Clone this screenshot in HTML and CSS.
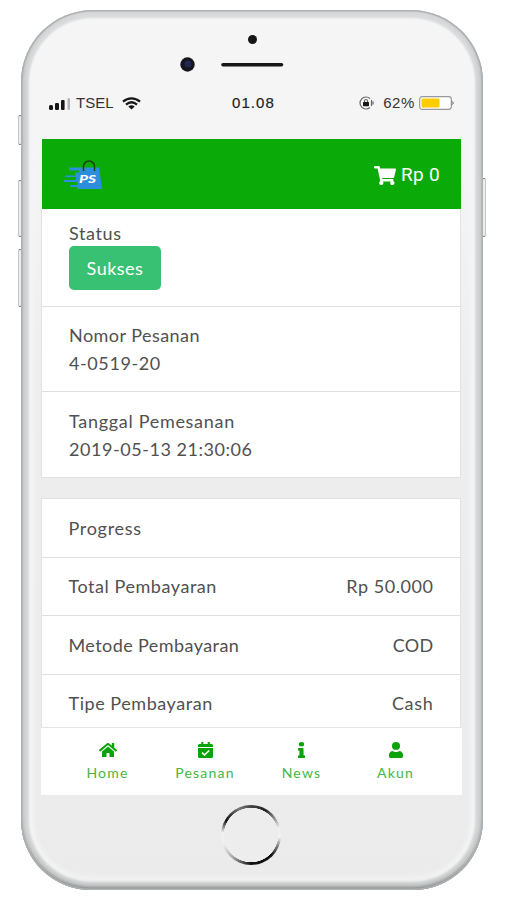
FILE: index.html
```html
<!DOCTYPE html>
<html lang="id">
<head>
<meta charset="utf-8">
<title>Detail Pesanan</title>
<link rel="stylesheet" href="styles.css">
</head>
<body>
<div class="device">
  <i class="key key-mute"></i><i class="key key-up"></i><i class="key key-down"></i><i class="key key-power"></i>
  <div class="phone">
    <div class="sensors">
      <svg width="420" height="70" viewBox="0 0 420 70">
        <circle cx="211.500" cy="29.500" r="4.500" fill="#161616"/>
        <circle cx="146.500" cy="54.500" r="7.200" fill="#15151b"/>
        <circle cx="147" cy="54" r="3.500" fill="#232653"/>
        <path d="M182 54.800h58.500" stroke="#171717" stroke-width="3.600" stroke-linecap="round"/>
      </svg>
    </div>
    <div class="statusbar">
      <div class="sb-left">
        <svg class="signal" width="22" height="13" viewBox="0 0 22 13"><g fill="#161616"><rect y="8" width="4" height="5" rx="1.500"/><rect x="6" y="6" width="4" height="7" rx="1.200"/><rect x="12" y="3" width="3.600" height="10" rx="1"/></g><rect x="18.500" y="1" width="2.500" height="12" rx="1" fill="#b5b5b5"/></svg>
        <span class="carrier">TSEL</span>
        <svg class="wifi" width="19" height="13" viewBox="0 0 19 13" fill="none" stroke="#161616" stroke-width="2.200"><path d="M1 4.600C6 .2 13 .2 18 4.600M4 7.600c3.500-3 7.500-3 11 0"/><path d="M9.500 12.500 6.300 9.600c2-1.700 4.400-1.700 6.400 0z" fill="#161616" stroke="none"/></svg>
      </div>
      <span class="clock">01.08</span>
      <div class="sb-right">
        <svg width="15" height="14" viewBox="0 0 15 14" fill="none" stroke="#666" stroke-width="1.200"><path d="M11 11.500A6 6 0 1 1 11 2.500M12.500 4v6M14 5.500v3M5.500 6.500V5a1.500 1.500 0 0 1 3 0v1.500"/><rect x="4" y="6" width="6" height="4.200" rx=".6" fill="#161616" stroke="none"/></svg>
        <span class="pct">62%</span>
        <svg width="36" height="14" viewBox="0 0 36 14"><rect x=".7" y=".7" width="31.600" height="12.600" rx="2.500" fill="#fff" stroke="#999" stroke-width="1.200"/><rect x="2.500" y="2.500" width="18" height="9" rx="1" fill="#fc0"/><path d="M32.500 4.500 35 7l-2.500 2.500z" fill="#aaa" stroke="#888" stroke-width=".6"/></svg>
      </div>
    </div>
    <div class="screen">
      <header class="topbar">
        <svg class="logo" width="40" height="32" viewBox="0 0 40 32">
          <path d="M6 8.500h30l3 21.500H14v-2H7v-2h7v-3H1v-2h12v-3H2v-1.500h10v-3h4v-2H6z" fill="#2d8fdc"/>
          <path d="M20.500 12V7.500a5.500 5.500 0 0 1 11 0V12" fill="none" stroke="#16400f" stroke-width="1.500"/>
          <text x="16" y="24" textLength="17" lengthAdjust="spacingAndGlyphs" class="logo-text">PS</text>
        </svg>
        <div class="cart">
          <svg width="22" height="19" viewBox="0 0 576 512" preserveAspectRatio="none" fill="#fff"><path d="M528.120 301.319l47.273-208C578.806 78.301 567.391 64 551.990 64H159.208l-9.166-44.810C147.758 8.021 137.930 0 126.529 0H24C10.745 0 0 10.745 0 24v16c0 13.255 10.745 24 24 24h69.883l70.248 343.435C147.325 417.100 136 435.222 136 456c0 30.928 25.072 56 56 56s56-25.072 56-56c0-15.674-6.447-29.835-16.824-40h209.647C430.447 426.165 424 440.326 424 456c0 30.928 25.072 56 56 56s56-25.072 56-56c0-22.172-12.888-41.332-31.579-50.405l5.517-24.276c3.413-15.018-8.002-29.319-23.403-29.319H218.117l-6.545-32h293.145c11.206 0 20.920-7.754 23.403-18.681z"/></svg>
          <span class="cart-total">Rp 0</span>
        </div>
      </header>
      <section class="card card-order">
        <div class="row row-status"><span class="label t-status">Status</span><span class="badge">Sukses</span></div>
        <div class="row row-number"><span class="label t-nomor">Nomor Pesanan</span><span class="label t-num">4-0519-20</span></div>
        <div class="row row-date"><span class="label t-tanggal">Tanggal Pemesanan</span><span class="label t-date">2019-05-13 21:30:06</span></div>
      </section>
      <section class="card card-progress">
        <div class="line"><span class="t-progress">Progress</span></div>
        <div class="line"><span class="t-total">Total Pembayaran</span><span class="t-amount">Rp 50.000</span></div>
        <div class="line"><span class="t-metode">Metode Pembayaran</span><span class="t-cod">COD</span></div>
        <div class="line"><span class="t-tipe">Tipe Pembayaran</span><span class="t-cash">Cash</span></div>
      </section>
    </div>
    <nav class="tabs">
      <a class="tab tab-home"><svg width="18" height="16" viewBox="0 0 576 512" preserveAspectRatio="none"><path d="M280.370 148.260L96 300.110V464a16 16 0 0 0 16 16l112.060-.290a16 16 0 0 0 15.920-16V368a16 16 0 0 1 16-16h64a16 16 0 0 1 16 16v95.640a16 16 0 0 0 16 16.050L464 480a16 16 0 0 0 16-16V300L295.670 148.260a12.190 12.190 0 0 0-15.300 0zM571.600 251.470L488 182.560V44.050a12 12 0 0 0-12-12h-56a12 12 0 0 0-12 12v72.610L318.470 43a48 48 0 0 0-61 0L4.340 251.470a12 12 0 0 0-1.600 16.900l25.500 31A12 12 0 0 0 45.150 301l235.220-193.740a12.190 12.190 0 0 1 15.300 0L530.900 301a12 12 0 0 0 16.900-1.600l25.500-31a12 12 0 0 0-1.700-16.930z"/></svg><span>Home</span></a>
      <a class="tab tab-pesanan"><svg width="15" height="16" viewBox="0 0 448 512" preserveAspectRatio="none"><path d="M436 160H12c-6.627 0-12-5.373-12-12v-36c0-26.510 21.490-48 48-48h48V12c0-6.627 5.373-12 12-12h40c6.627 0 12 5.373 12 12v52h128V12c0-6.627 5.373-12 12-12h40c6.627 0 12 5.373 12 12v52h48c26.510 0 48 21.490 48 48v36c0 6.627-5.373 12-12 12zM12 192h424c6.627 0 12 5.373 12 12v260c0 26.510-21.490 48-48 48H48c-26.510 0-48-21.490-48-48V204c0-6.627 5.373-12 12-12z"/><path d="M120 340l75 76 140-142" fill="none" stroke="#fff" stroke-width="50"/></svg><span>Pesanan</span></a>
      <a class="tab tab-news"><svg width="7" height="16" viewBox="0 0 192 512" preserveAspectRatio="none"><path d="M20 424.229h20V279.771H20c-11.046 0-20-8.954-20-20V212c0-11.046 8.954-20 20-20h112c11.046 0 20 8.954 20 20v212.229h20c11.046 0 20 8.954 20 20V492c0 11.046-8.954 20-20 20H20c-11.046 0-20-8.954-20-20v-47.771c0-11.046 8.954-20 20-20zM96 0a72 72 0 1 0 0 144A72 72 0 1 0 96 0z"/></svg><span>News</span></a>
      <a class="tab tab-akun"><svg width="14" height="16" viewBox="0 0 448 512" preserveAspectRatio="none"><ellipse cx="224" cy="125" rx="128" ry="125"/><path d="M105 285c70 42 168 42 238 0 62 10 105 65 105 130v50c0 28-20 47-48 47H48c-28 0-48-19-48-47v-50c0-65 43-120 105-130z"/></svg><span>Akun</span></a>
    </nav>
    <div class="home-button"></div>
  </div>
</div>
</body>
</html>
```
FILE: styles.css
```css
* { box-sizing: border-box; }
body { margin: 0; background: #fff; font-family: Lato, "Liberation Sans", sans-serif; color: #505050; height: 900px; overflow: hidden; }
.device { position: relative; width: 506px; padding: 10px 0 0 21px; }
.key { position: absolute; width: 4px; border: 1px solid #c4c6c8; border-top-color: #777; border-bottom-color: #777; border-radius: 2px; background: #eee; }
.key-mute { left: 18px; top: 115px; height: 30px; }
.key-up { left: 18px; top: 180px; height: 57px; }
.key-down { left: 18px; top: 249px; height: 58px; }
.key-power { left: 482px; top: 178px; height: 59px; }
.phone {
  position: relative; width: 462px; height: 880px; padding: 0 22px 0 20px; display: flex; flex-direction: column;
  border-radius: 72px 72px 70px 70px;
  background: linear-gradient(#f5f5f5 0, #f5f5f5 15%, #eee 40%, #ebebeb 100%);
  box-shadow: inset 0 0 0 1.5px #aeb1b3, inset 0 -3px 3px #8b8e8e, inset 0 -3px 4px 4px #c4c6c6, inset 0 0 2px 8px #d9dbdc, inset 0 0 5px 12px #f6f6f6;
}
.sensors { height: 70px; }
.sensors svg { display: block; }
.statusbar { height: 59px; padding: 14px 6px 0 8px; display: grid; grid-template-columns: 1fr auto 1fr; align-items: start; font: 15px/18px "Liberation Sans", sans-serif; color: #333; }
.sb-left, .sb-right { display: flex; align-items: center; height: 18px; }
.sb-right { justify-content: flex-end; }
.carrier { margin-left: 5px; }
.wifi { margin-left: 8px; }
.clock { letter-spacing: 1.1px; color: #222; padding-left: 3px; -webkit-text-stroke: .2px #222; }
.pct { margin: 0 4px 0 9px; letter-spacing: .6px; }
.screen { width: 420px; height: 588px; overflow: hidden; }
.topbar { height: 70px; margin-left: .5px; background: #0aab08; display: flex; align-items: center; justify-content: space-between; padding: 2px 21px 0 21px; }
.logo-text { font: italic 900 11px Lato, sans-serif; fill: #fff; }
.cart { display: flex; align-items: center; color: #fff; font: 19px/24px Roboto, sans-serif; }
.cart-total { margin-left: 5px; letter-spacing: .3px; }
.card { background: #fff; border: 1px solid #e2e2e2; font-size: 18px; }
.card-order { border-top: 0; height: 269px; }
.row { padding: 0 27px; display: flex; flex-direction: column; align-items: flex-start; border-bottom: 1px solid #e0e0e0; }
.row:last-child { border-bottom: 0; }
.row-status { height: 98px; padding-top: 11px; }
.row-number { height: 85px; padding-top: 15px; }
.row-date { height: 85px; padding-top: 16px; }
.label { line-height: 27.500px; }
.badge { height: 44px; width: 92px; border-radius: 5px; background: #38c172; color: #fff; line-height: 44px; text-align: center; letter-spacing: .5px; }
.card-progress { margin-top: 20px; height: 240px; }
.line { height: 58.500px; padding: 0 26.500px; display: flex; align-items: center; justify-content: space-between; border-bottom: 1px solid #e0e0e0; }
.row-status .label { line-height: 26px; }
.t-status { letter-spacing: .6px; }
.t-nomor { letter-spacing: .45px; }
.t-num { letter-spacing: .6px; }
.t-tanggal { letter-spacing: .7px; }
.t-date { letter-spacing: .55px; }
.t-progress { letter-spacing: .7px; }
.t-total { letter-spacing: .55px; }
.t-metode { letter-spacing: .42px; }
.t-tipe { letter-spacing: .55px; }
.t-amount { letter-spacing: .55px; }
.t-cod { letter-spacing: .3px; }
.t-cash { letter-spacing: .7px; }
.tabs { width: 421px; height: 68px; border-top: 1px solid #e4e4e4; background: #fff; display: grid; grid-template-columns: 43px 60px 41px 37px; column-gap: 46px; padding: 14px 0 0 45px; font-size: 14px; line-height: 18px; color: #43b742; }
.tab { display: flex; flex-direction: column; align-items: center; letter-spacing: 1.2px; white-space: nowrap; }
.tab-akun { margin-left: 9px; margin-right: -9px; }
.tab svg { fill: #0ba20a; margin-bottom: 6px; }
.home-button { width: 60px; height: 60px; margin: 10px 0 0 180px; border-radius: 50%; background: radial-gradient(circle, #ededed 0 27px, transparent 27.5px), conic-gradient(#444 0deg, #222 30deg, #aaa 60deg, #eee 75deg, #f2f2f2 95deg, #999 108deg, #111 135deg, #111 180deg, #aaa 220deg, #eee 250deg, #f2f2f2 275deg, #111 300deg, #777 335deg, #444 360deg); }
```
